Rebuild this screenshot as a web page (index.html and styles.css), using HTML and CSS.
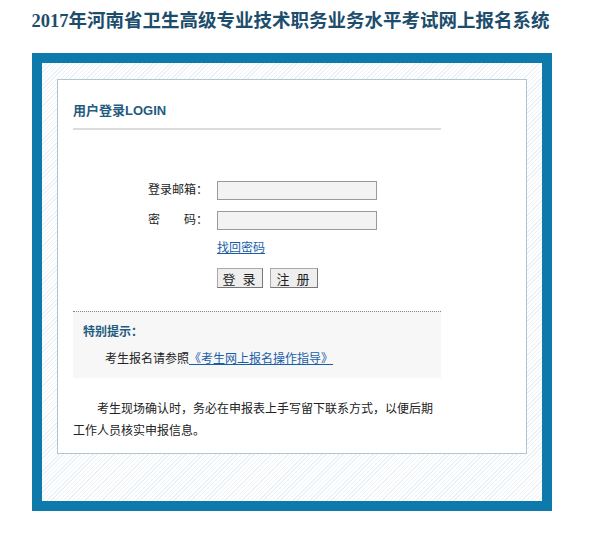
FILE: index.html
```html
<!DOCTYPE html>
<html lang="zh-CN">
<head>
    <meta charset="UTF-8">
    <title>2017年河南省卫生高级专业技术职务业务水平考试网上报名系统</title>
    <link rel="stylesheet" href="styles.css">
</head>
<body>
    <h1 class="title">2017年河南省卫生高级专业技术职务业务水平考试网上报名系统</h1>
    <div class="frame">
        <div class="panel">
            <h2 class="login-head">用户登录LOGIN</h2>
            <form class="login-form">
                <label class="lbl" for="email">登录邮箱：</label>
                <input class="txt" id="email" type="text">
                <label class="lbl lbl-pwd" for="pwd"><span>密</span><span>码：</span></label>
                <input class="txt" id="pwd" type="password">
                <div class="cell"><a href="#" class="link">找回密码</a></div>
                <div class="cell btns">
                    <button type="button" class="btn">登 录</button>
                    <button type="button" class="btn">注 册</button>
                </div>
            </form>
            <div class="tips">
                <p class="tips-head">特别提示：</p>
                <p class="tips-line">考生报名请参照<a href="#" class="link">《考生网上报名操作指导》</a></p>
            </div>
            <p class="note">考生现场确认时，务必在申报表上手写留下联系方式，以便后期工作人员核实申报信息。</p>
        </div>
    </div>
</body>
</html>
```

FILE: styles.css
```css
body {
    margin: 0;
    background: #fff;
    font-family: "Liberation Sans", "Noto Sans CJK SC", sans-serif;
    font-size: 12px;
    color: #333;
}
.title {
    margin: 0;
    height: 53px;
    padding: 10px 12px 0 0;
    box-sizing: border-box;
    text-align: center;
    font-family: "Liberation Serif", "Noto Sans CJK SC", serif;
    font-size: 18.5px;
    line-height: 22px;
    color: #1d4d6c;
}
.frame {
    width: 520px;
    margin-left: 32px;
    box-sizing: border-box;
    border: 10px solid #0d7aab;
    padding: 16px 15px 47px 15px;
    background: repeating-linear-gradient(-45deg, #fff 0, #fff 2px, #ebf2f7 2px, #ebf2f7 3px);
}
.panel {
    height: 375px;
    box-sizing: border-box;
    border: 1px solid #b3c5d1;
    background: #fff;
    padding: 21px 15px 0 15px;
}
.login-head {
    width: 368px;
    margin: 0;
    font-size: 13px;
    line-height: 20px;
    color: #1f5c80;
    padding-bottom: 7px;
    border-bottom: 2px solid #dcdcdc;
}
.login-form {
    display: grid;
    grid-template-columns: 60px 160px;
    column-gap: 9px;
    margin: 51px 0 0 75px;
}
.lbl {
    line-height: 19px;
    color: #222;
}
.lbl-pwd {
    display: flex;
    justify-content: space-between;
    margin-top: 11px;
}
.txt {
    width: 160px;
    height: 19px;
    box-sizing: border-box;
    margin: 0;
    border: 1px solid #9a9a9a;
    background: #f3f3f3;
    padding: 0 3px;
}
#pwd {
    margin-top: 11px;
}
.cell {
    grid-column: 2;
}
.cell .link {
    display: inline-block;
    margin-top: 10px;
    line-height: 16px;
}
.btns {
    display: flex;
    gap: 7px;
    margin-top: 12px;
}
.btn {
    width: 46px;
    height: 20px;
    padding: 0;
    border: 1px solid #777;
    border-top-color: #aaa;
    border-left-color: #aaa;
    background: #eeeeee;
    font-family: "Noto Sans CJK SC", sans-serif;
    font-size: 13px;
    letter-spacing: 2px;
    color: #222;
}
.btn + .btn {
    width: 48px;
}
.link {
    color: #1a5ea8;
    text-decoration: underline;
}
.tips {
    width: 368px;
    margin-top: 23px;
    border-top: 1px dotted #888;
    background: #f7f7f7;
    padding: 10px 0 9px 0;
}
.tips p {
    margin: 0;
    line-height: 20px;
}
.tips-head {
    padding-left: 10px;
    font-weight: bold;
    color: #1f5c80;
}
.tips-line {
    margin-top: 7px !important;
    padding-left: 32px;
    color: #222;
}
.note {
    width: 368px;
    margin: 20px 0 0 0;
    line-height: 22px;
    text-indent: 2em;
    color: #222;
}
```
